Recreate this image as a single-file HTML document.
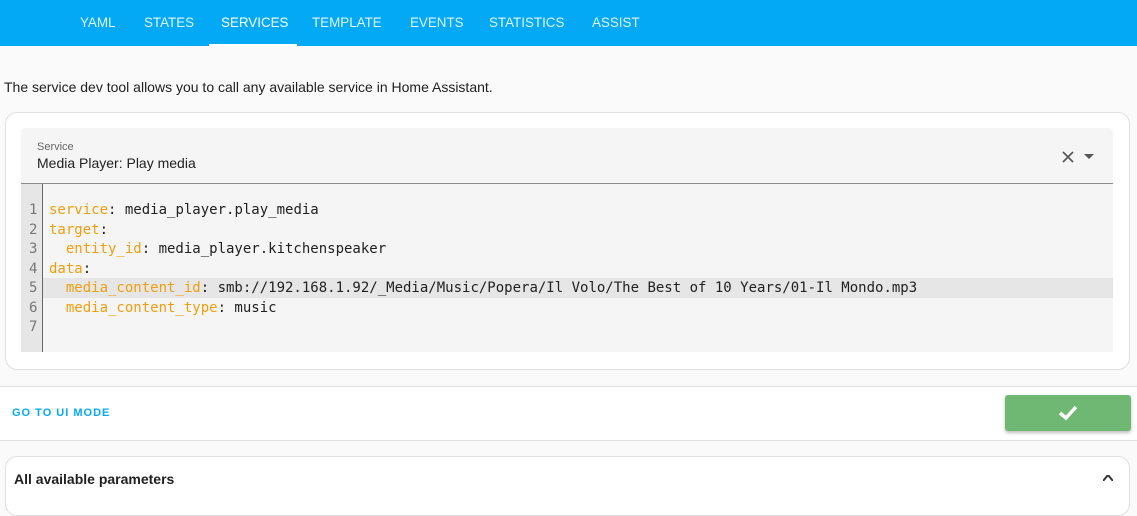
<!DOCTYPE html>
<html><head><style>
body{margin:0;width:1137px;height:481px;overflow:hidden;background:#fafafa;font-family:"Liberation Sans",sans-serif;position:relative}
.hdr{position:absolute;left:0;top:0;width:1137px;height:46px;background:#03a9f4}
.tab{position:absolute;top:15px;color:rgba(255,255,255,.88);font-size:13.4px;font-weight:500}
.act{color:#fff}
.ul{position:absolute;left:209px;top:44px;width:88px;height:2px;background:#fff}
.desc{position:absolute;left:4px;top:79px;font-size:14px;color:#212121}
.card{position:absolute;left:5px;top:112px;width:1125px;height:258px;background:#fff;border:1px solid #e0e0e0;border-radius:12px;box-sizing:border-box}
.field{position:absolute;left:21px;top:128px;width:1092px;height:55px;background:#f5f5f5;border-bottom:1px solid #8c8c8c;border-radius:4px 4px 0 0}
.lab{position:absolute;left:16px;top:13px;font-size:11px;color:#666}
.val{position:absolute;left:16px;top:27px;font-size:14px;color:#212121}
.code{position:absolute;left:21px;top:184px;width:1092px;height:168px;background:#f5f5f5}
.gut{position:absolute;left:0;top:0;width:21px;height:168px;background:#e6e6e6;border-right:1px solid #666}
.ln{position:absolute;font-family:"DejaVu Sans Mono",monospace;font-size:14px;white-space:pre;line-height:19.5px}
.hl{position:absolute;left:22px;top:94px;width:1070px;height:20px;background:#e6e6e6}
.k{color:#f29e0c}
.sec{position:absolute;left:0;top:386px;width:1137px;height:53px;background:#fff;border-top:1px solid #e0e0e0;border-bottom:1px solid #e0e0e0}
.btn{position:absolute;left:1005px;top:395px;width:126px;height:36px;background:#6fb874;border-radius:3px;box-shadow:0 2px 3px rgba(0,0,0,.25)}
.card2{position:absolute;left:5px;top:456px;width:1125px;height:60px;background:#fff;border:1px solid #e0e0e0;border-radius:12px;box-sizing:border-box}
</style></head><body>
<div class="hdr">
<span class="tab" style="left:80px">YAML</span>
<span class="tab" style="left:144px">STATES</span>
<span class="tab act" style="left:221px">SERVICES</span>
<span class="tab" style="left:312px">TEMPLATE</span>
<span class="tab" style="left:410px">EVENTS</span>
<span class="tab" style="left:489px">STATISTICS</span>
<span class="tab" style="left:592px">ASSIST</span>
<div class="ul"></div>
</div>
<div class="desc">The service dev tool allows you to call any available service in Home Assistant.</div>
<div class="card"></div>
<div class="field"><div class="lab">Service</div><div class="val">Media Player: Play media</div>
<svg style="position:absolute;left:1040px;top:22px" width="14" height="14" viewBox="0 0 14 14"><path d="M2 2L12 12M12 2L2 12" stroke="#555" stroke-width="1.6"/></svg>
<svg style="position:absolute;left:1063px;top:26px" width="10" height="6"><path d="M0 0H10L5 5Z" fill="#555"/></svg>
</div>
<div class="code">
<div class="hl"></div>
<div class="gut"></div>
<div class="ln" style="left:8px;top:17px;color:#777">1
2
3
4
5
6
7</div>
<div class="ln" style="left:28px;top:17px;color:#212121"><span class="k">service</span>: media_player.play_media
<span class="k">target</span>:
  <span class="k">entity_id</span>: media_player.kitchenspeaker
<span class="k">data</span>:
  <span class="k">media_content_id</span>: smb://192.168.1.92/_Media/Music/Popera/Il Volo/The Best of 10 Years/01-Il Mondo.mp3
  <span class="k">media_content_type</span>: music
</div>
</div>
<div class="sec"><span style="position:absolute;left:12px;top:20px;font-size:11px;font-weight:bold;color:#03a9f4;letter-spacing:1px">GO TO UI MODE</span></div>
<div class="btn"><svg style="position:absolute;left:53px;top:9px" width="20" height="18" viewBox="0 0 20 18"><path d="M2 9L8 14L18 3" stroke="#fff" stroke-width="3.5" fill="none"/></svg></div>
<div class="card2"><span style="position:absolute;left:8px;top:14px;font-size:14px;font-weight:bold;color:#212121">All available parameters</span>
<svg style="position:absolute;left:1097px;top:18px" width="10" height="6"><path d="M0 6L5 0L10 6" stroke="#333" stroke-width="2" fill="none"/></svg></div>
</body></html>
